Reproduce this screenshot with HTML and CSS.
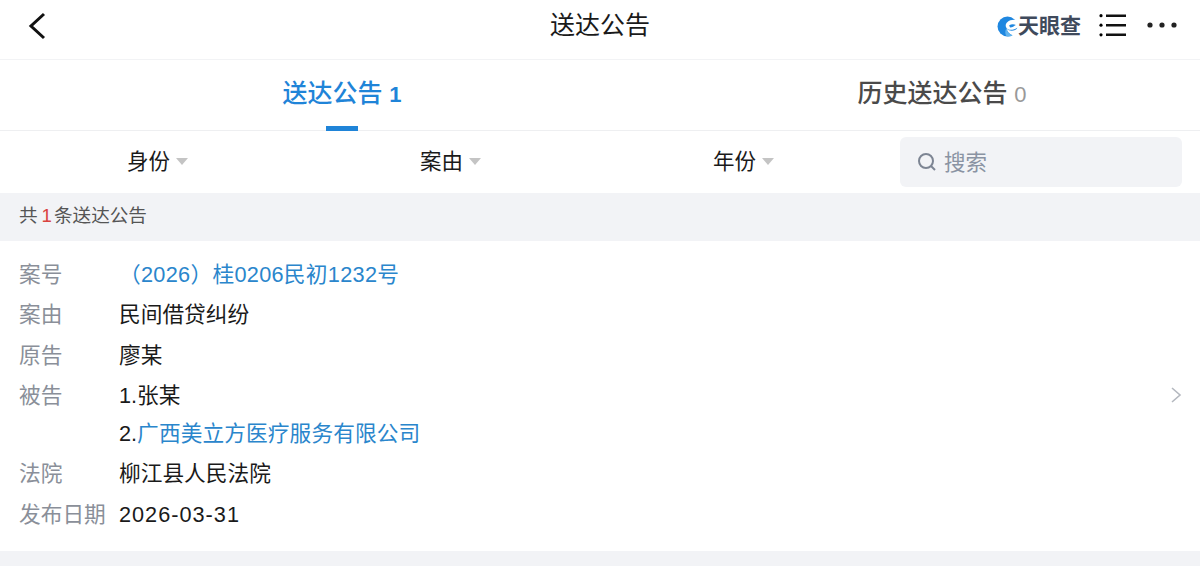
FILE: index.html
```html
<!DOCTYPE html>
<html lang="zh-CN">
<head>
    <meta charset="UTF-8">
    <meta name="viewport" content="width=device-width, initial-scale=1.0">
    <title>送达公告</title>
    <link rel="stylesheet" href="styles.css">
</head>
<body>
    <div class="header">
        <svg class="back-icon" width="20" height="30" viewBox="0 0 20 30"><path d="M17 3 L4 15 L17 27" /></svg>
        <div class="header-title">送达公告</div>
        <div class="header-tools">
            <div class="brand">
                <svg class="brand-mark" width="21" height="21" viewBox="0 0 20 20">
                    <circle cx="10" cy="10" r="9.5" fill="#1f87e0" />
                    <path d="M20 4 C13 2 7 6 8.5 10.5 C10 14 15 14 20 11 L20 4 Z" fill="#fff" />
                    <path d="M20 11 C17 15 12 15 9 12 C10 16 13 18 16 19 L20 20 Z" fill="#fff" />
                    <path d="M11.5 9 C13.5 7.5 16 7.5 18 8.5 C16 9.5 15 11 12.5 11 Z" fill="#1f87e0" />
                    <path d="M9 12 C10 15.5 12 17.5 15 18.5 C13 19.5 11 19.6 9 19.3 C7.5 17 7.5 14 9 12 Z" fill="#62b4ee" />
                </svg>
                <span class="brand-name">天眼查</span>
            </div>
            <svg class="list-icon" width="28" height="24" viewBox="0 0 28 24">
                <path d="M7 1.7 H27 M7 11.2 H27 M7 20.8 H27" />
                <circle cx="2" cy="1.7" r="1.6" /><circle cx="2" cy="11.2" r="1.6" /><circle cx="2" cy="20.8" r="1.6" />
            </svg>
            <svg class="more-icon" width="32" height="8" viewBox="0 0 32 8">
                <circle cx="4" cy="4" r="2.6" /><circle cx="16" cy="4" r="2.6" /><circle cx="28" cy="4" r="2.6" />
            </svg>
        </div>
    </div>
    <div class="tab-container">
        <div class="tab active">送达公告 <span class="tab-count">1</span></div>
        <div class="tab">历史送达公告 <span class="tab-count">0</span></div>
    </div>
    <div class="filter-bar">
        <div class="filter"><span>身份</span><i class="caret"></i></div>
        <div class="filter"><span>案由</span><i class="caret"></i></div>
        <div class="filter"><span>年份</span><i class="caret"></i></div>
        <div class="search">
            <svg width="20" height="20" viewBox="0 0 20 20"><circle cx="9" cy="9" r="7" /><path d="M14 14 L18 18" /></svg>
            <span>搜索</span>
        </div>
    </div>
    <div class="summary">共<span class="summary-num">1</span>条送达公告</div>
    <div class="card">
        <div class="rows">
            <div class="row"><div class="label">案号</div><div class="value link case-no">（2026）桂0206民初1232号</div></div>
            <div class="row"><div class="label">案由</div><div class="value">民间借贷纠纷</div></div>
            <div class="row"><div class="label">原告</div><div class="value">廖某</div></div>
            <div class="row row-multi"><div class="label">被告</div><div class="value"><div>1.张某</div><div class="second">2.<span class="link">广西美立方医疗服务有限公司</span></div></div></div>
            <div class="row"><div class="label">法院</div><div class="value">柳江县人民法院</div></div>
            <div class="row"><div class="label">发布日期</div><div class="value date">2026-03-31</div></div>
        </div>
        <svg class="chevron" width="12" height="18" viewBox="0 0 12 18"><path d="M2 2 L10 9 L2 16" /></svg>
    </div>
    <div class="footer-band"></div>
</body>
</html>
```

FILE: styles.css
```css
* {
    box-sizing: border-box;
}

body {
    margin: 0;
    width: 1200px;
    height: 566px;
    overflow: hidden;
    background-color: #ffffff;
    color: #111111;
    font-family: 'Liberation Sans', 'Noto Sans CJK SC', sans-serif;
}

.header {
    position: relative;
    height: 60px;
    display: flex;
    justify-content: center;
    border-bottom: 1px solid #f2f3f5;
}

.back-icon {
    position: absolute;
    left: 27px;
    top: 11px;
}

.back-icon path {
    fill: none;
    stroke: #111111;
    stroke-width: 3;
}

.header-title {
    font-size: 25px;
    line-height: 50px;
    color: #1a1a1a;
}

.header-tools {
    position: absolute;
    right: 22px;
    top: 13px;
    display: flex;
    align-items: center;
}

.brand {
    display: flex;
    align-items: center;
    margin-right: 18px;
}

.brand-name {
    font-size: 21px;
    font-weight: 700;
    line-height: 26px;
    color: #3f4a5c;
}

.list-icon {
    margin-right: 19px;
}

.list-icon path {
    stroke: #111111;
    stroke-width: 2.6;
}

.more-icon {
    margin-top: -2px;
    fill: #222222;
}

.tab-container {
    height: 71px;
    display: flex;
    border-bottom: 1px solid #eeeff1;
}

.tab {
    position: relative;
    width: 50%;
    padding: 12px 0 0 84px;
    text-align: center;
    font-size: 25px;
    line-height: 42px;
    font-weight: 500;
    color: #4a4a4a;
}

.tab-count {
    font-size: 22px;
    font-weight: 400;
    color: #999999;
}

.tab.active {
    color: #1f84d8;
}

.tab.active .tab-count {
    color: #1f84d8;
    font-weight: 700;
}

.tab.active::after {
    content: "";
    position: absolute;
    left: 326px;
    bottom: -1px;
    width: 32px;
    height: 5px;
    background-color: #1f84d8;
}

.filter-bar {
    height: 62px;
    display: flex;
    align-items: center;
    padding: 0 18px 0 11px;
}

.filter {
    width: 293px;
    padding-bottom: 6px;
    display: flex;
    justify-content: center;
    align-items: center;
    font-size: 21.5px;
    color: #1a1a1a;
}

.caret {
    width: 0;
    height: 0;
    margin: 4px 0 0 6px;
    border-left: 6px solid transparent;
    border-right: 6px solid transparent;
    border-top: 7px solid #c4c4c4;
}

.search {
    flex: 1;
    height: 50px;
    margin-left: 10px;
    padding-left: 17px;
    display: flex;
    align-items: center;
    gap: 7px;
    border-radius: 6px;
    background-color: #f2f3f6;
    font-size: 21.5px;
    color: #8a93a3;
}

.search span {
    padding-bottom: 3px;
}

.search svg {
    fill: none;
    stroke: #7d8593;
    stroke-width: 2;
}

.summary {
    height: 48px;
    padding-left: 19px;
    background-color: #f2f3f6;
    font-size: 18.6px;
    line-height: 46px;
    color: #555555;
}

.summary-num {
    margin: 0 2px 0 4px;
    color: #d9433f;
}

.card {
    position: relative;
    height: 310px;
    padding: 14px 19px 0;
}

.row {
    display: flex;
    height: 40.3px;
    font-size: 21.7px;
    line-height: 40px;
}

.row-multi {
    height: 78.5px;
}

.label {
    width: 100px;
    color: #8a8f99;
}

.value {
    color: #1a1a1a;
}

.second {
    line-height: 36px;
}

.second .link {
    letter-spacing: 0.1px;
}

.link,
.value.link {
    color: #2a86cc;
}

.case-no {
    letter-spacing: 0.3px;
}

.date {
    letter-spacing: 1px;
}

.chevron {
    position: absolute;
    right: 18px;
    top: 145px;
}

.chevron path {
    fill: none;
    stroke: #b4b8bf;
    stroke-width: 1.6;
}

.footer-band {
    height: 15px;
    background-color: #f2f3f6;
}
```
